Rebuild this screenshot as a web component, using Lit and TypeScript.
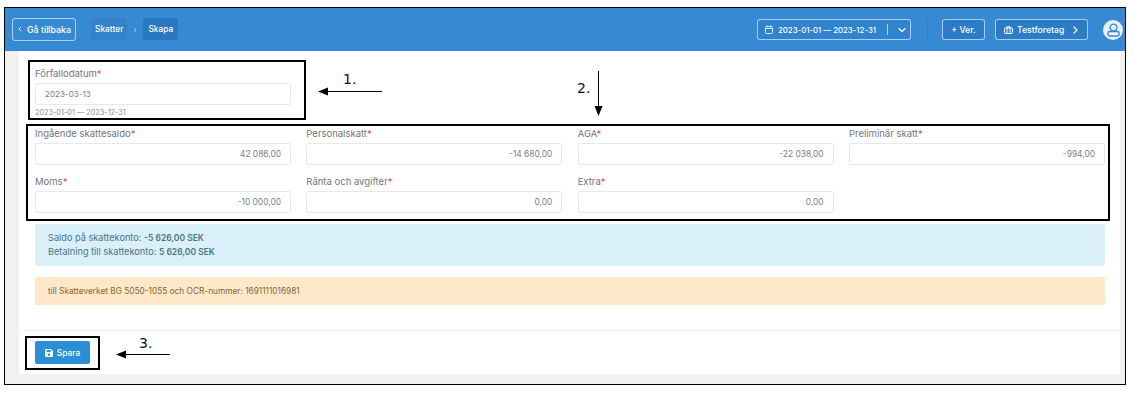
import { LitElement, html, css, svg } from "lit";
import { customElement } from "lit/decorators.js";

const FONT = css`"Inter", "Noto Sans", sans-serif`;

const row1 = [
  ["Ingående skattesaldo", "42 086,00"],
  ["Personalskatt", "-14 680,00"],
  ["AGA", "-22 038,00"],
  ["Preliminär skatt", "-994,00"],
  ["Moms", "-10 000,00"],
  ["Ränta och avgifter", "0,00"],
  ["Extra", "0,00"],
];

@customElement("app-root")
export class AppRoot extends LitElement {
  static styles = css`
    :host { display: block; position: relative; width: 1134px; height: 406px; background: #fff; font-family: ${FONT}; overflow: hidden; }
    .window { box-sizing: border-box; margin: 7px 0 0 4px; width: 1122px; height: 378px; border: 1px solid #000; background: #f1f1f1; display: flex; flex-direction: column; }
    header { height: 43px; flex: none; background: #368ad4; display: flex; align-items: center; padding: 0 2px 0 7px; color: #fff; font-size: 8.4px; font-weight: 500; box-sizing: border-box; }
    .btn { box-sizing: border-box; border: 1px solid rgba(255,255,255,.6); border-radius: 3px; display: flex; align-items: center; background: #2a7cc7; height: 21px; white-space: nowrap; }
    .back { width: 64px; height: 23px; background: transparent; justify-content: center; gap: 4px; margin-top: -1px; font-size: 8.8px; }
    .crumbs { display: flex; align-items: center; margin-left: 15px; }
    .crumb { height: 22px; display: flex; align-items: center; padding: 0 4px; background: #3382cb; border-radius: 2px; margin-top: -1px; }
    .crumb.on { background: #2a78c0; padding: 0 5px; }
    .sep { width: 16px; display: flex; justify-content: center; opacity: .6; }
    .spacer { flex: 1; }
    .date { width: 154px; padding-left: 7px; gap: 5px; background: #3083cf; font-size: 7.8px; }
    .date .divider { width: 1px; height: 11px; background: rgba(255,255,255,.7); margin-left: 6px; }
    .date .chev { flex: 1; display: flex; justify-content: center; }
    .vsep { width: 1px; height: 21px; background: #3480c6; margin: 0 14px 0 16px; }
    .ver { width: 43px; justify-content: center; gap: 3px; margin-right: 10px; font-size: 8.7px; }
    .company { width: 93px; padding-left: 8px; gap: 4px; font-size: 8.7px; }
    .company .end { margin-left: 3px; display: flex; }
    .avatar { width: 20px; height: 20px; border-radius: 50%; background: #e9f0f7; margin-left: 15px; display: flex; align-items: center; justify-content: center; }
    .body { flex: 1; margin: 0 5px 10px 14px; background: #fff; display: flex; flex-direction: column; min-height: 0; }
    .content { flex: 1; padding: 17px 15px 0 16px; }
    label { display: block; font-size: 9.5px; line-height: 12px; color: #6f7680; font-weight: 400; margin-bottom: 3px; white-space: nowrap; }
    label i { color: #e5484d; font-style: normal; }
    .input { box-sizing: border-box; height: 22px; border: 1px solid #e6e8eb; border-radius: 2px; background: #fff; font-size: 8.4px; color: #7b8088; display: flex; align-items: center; padding: 0 9px; justify-content: flex-end; }
    .first { width: 256px; }
    .first .input { justify-content: flex-start; font-size: 8.1px; }
    .hint { font-size: 7.3px; color: #8a8f96; line-height: 12px; margin-top: 2px; }
    .grid { display: grid; grid-template-columns: repeat(4, 256px); column-gap: 15.33px; row-gap: 11px; margin-top: 9px; }
    .alert { border-radius: 2px; font-size: 8.3px; line-height: 13px; box-sizing: border-box; padding: 0 13px; display: flex; flex-direction: column; justify-content: center; }
    .alert b { font-weight: 600; font-size: 8.5px; }
    .info { height: 42px; background: #d9f0f8; color: #4a7486; margin-top: 11px; font-size: 9.2px; }
    .warn { height: 28px; background: #fee8c9; color: #8a6532; margin-top: 11px; }
    footer { flex: none; height: 44px; border-top: 1px solid #f1f2f3; padding: 10px 16px 0; box-sizing: border-box; }
    .save { width: 55px; height: 23px; background: #2a8fd6; border: 0; border-radius: 2px; color: #fff; font: 500 8.4px ${FONT}; display: flex; align-items: center; justify-content: center; gap: 4px; padding: 0; }
    .box { position: absolute; box-sizing: border-box; border: 2px solid #000; pointer-events: none; }
    .b1 { left: 28px; top: 60px; width: 278px; height: 60px; }
    .b2 { left: 26px; top: 124px; width: 1084px; height: 97px; }
    .b3 { left: 25px; top: 336px; width: 75px; height: 34px; }
    .note { position: absolute; font: 14px "DejaVu Sans", sans-serif; color: #111; line-height: 16px; }
    .n1 { left: 343px; top: 71px; }
    .n2 { left: 577px; top: 80px; }
    .n3 { left: 139px; top: 335px; }
    .arrows { position: absolute; inset: 0; pointer-events: none; }
  `;

  private chev(d: string, w = 6) {
    return html`<svg width=${w} height=${w} viewBox="0 0 8 8" fill="none" stroke="#fff" stroke-width="1.2" stroke-linecap="round" stroke-linejoin="round"><path d=${d}></path></svg>`;
  }

  private field(name: string, value: string) {
    return html`<div><label>${name}<i>*</i></label><div class="input">${value}</div></div>`;
  }

  render() {
    return html`
      <div class="window">
        <header>
          <div class="btn back">${this.chev("M5 1.5 2.5 4 5 6.5", 6)}<span>Gå tillbaka</span></div>
          <div class="crumbs">
            <div class="crumb">Skatter</div>
            <div class="sep">${this.chev("M3 1.5 5.5 4 3 6.5", 6)}</div>
            <div class="crumb on">Skapa</div>
          </div>
          <div class="spacer"></div>
          <div class="btn date">
            <svg width="8" height="9" viewBox="0 0 8 9" fill="none" stroke="#fff" stroke-width=".8"><rect x=".5" y="1.5" width="7" height="7" rx="1"></rect><path d="M.5 3.5h7M2.3.3v2M5.7.3v2"></path></svg>
            <span>2023-01-01 — 2023-12-31</span>
            <span class="divider"></span>
            <span class="chev">${this.chev("M1 2.5 4 5.5 7 2.5", 8)}</span>
          </div>
          <div class="vsep"></div>
          <div class="btn ver">+ Ver.</div>
          <div class="btn company">
            <svg width="9" height="8" viewBox="0 0 9 8" fill="none" stroke="#fff" stroke-width="1"><rect x=".5" y="2" width="8" height="5.5" rx="1"></rect><path d="M3 2V.7h3V2M3 2v5.5M6 2v5.5"></path></svg>
            <span>Testforetag</span>
            <span class="end">${this.chev("M3 1 6 4 3 7", 8)}</span>
          </div>
          <div class="avatar">
            <svg width="13" height="14" viewBox="0 0 13 14" fill="none" stroke="#368ad4" stroke-width="1.3"><circle cx="6.5" cy="4.5" r="3.4"></circle><path d="M2.5 8.5h8c1 0 1.6 1 1.6 2.2 0 1.2-.7 2.3-1.9 2.3H2.8C1.6 13 .9 11.9.9 10.7.9 9.5 1.5 8.5 2.5 8.5z"></path></svg>
          </div>
        </header>
        <div class="body">
          <div class="content">
            <div class="first">
              <label>Förfallodatum<i>*</i></label>
              <div class="input">2023-03-13</div>
              <div class="hint">2023-01-01 — 2023-12-31</div>
            </div>
            <div class="grid">${row1.map(([n, v]) => this.field(n, v))}</div>
            <div class="alert info">
              <div>Saldo på skattekonto: <b>-5 626,00 SEK</b></div>
              <div>Betalning till skattekonto: <b>5 626,00 SEK</b></div>
            </div>
            <div class="alert warn">till Skatteverket BG 5050-1055 och OCR-nummer: 1691111016981</div>
          </div>
          <footer>
            <button class="save">
              <svg width="8" height="8" viewBox="0 0 8 8"><path fill="#fff" fill-rule="evenodd" d="M1 0h5l2 2v5a1 1 0 0 1-1 1H1a1 1 0 0 1-1-1V1a1 1 0 0 1 1-1zm.6 1v2h4V1zM4 4.6a1.2 1.2 0 1 0 0 2.4 1.2 1.2 0 0 0 0-2.4z"></path></svg>
              <span>Spara</span>
            </button>
          </footer>
        </div>
      </div>
      <div class="box b1"></div>
      <div class="box b2"></div>
      <div class="box b3"></div>
      <svg class="arrows" width="1134" height="406">
        ${svg`<g stroke="#000" fill="#000">
          <path d="M328 91.5H382" fill="none"></path><path d="M318 91.5 328 87.5V95.5Z" stroke="none"></path>
          <path d="M598.5 71V106" fill="none"></path><path d="M598.5 116 594.5 106H602.5Z" stroke="none"></path>
          <path d="M126 354.5H170" fill="none"></path><path d="M116 354.5 126 350.5V358.5Z" stroke="none"></path>
        </g>`}
      </svg>
      <div class="note n1">1.</div>
      <div class="note n2">2.</div>
      <div class="note n3">3.</div>
    `;
  }
}
